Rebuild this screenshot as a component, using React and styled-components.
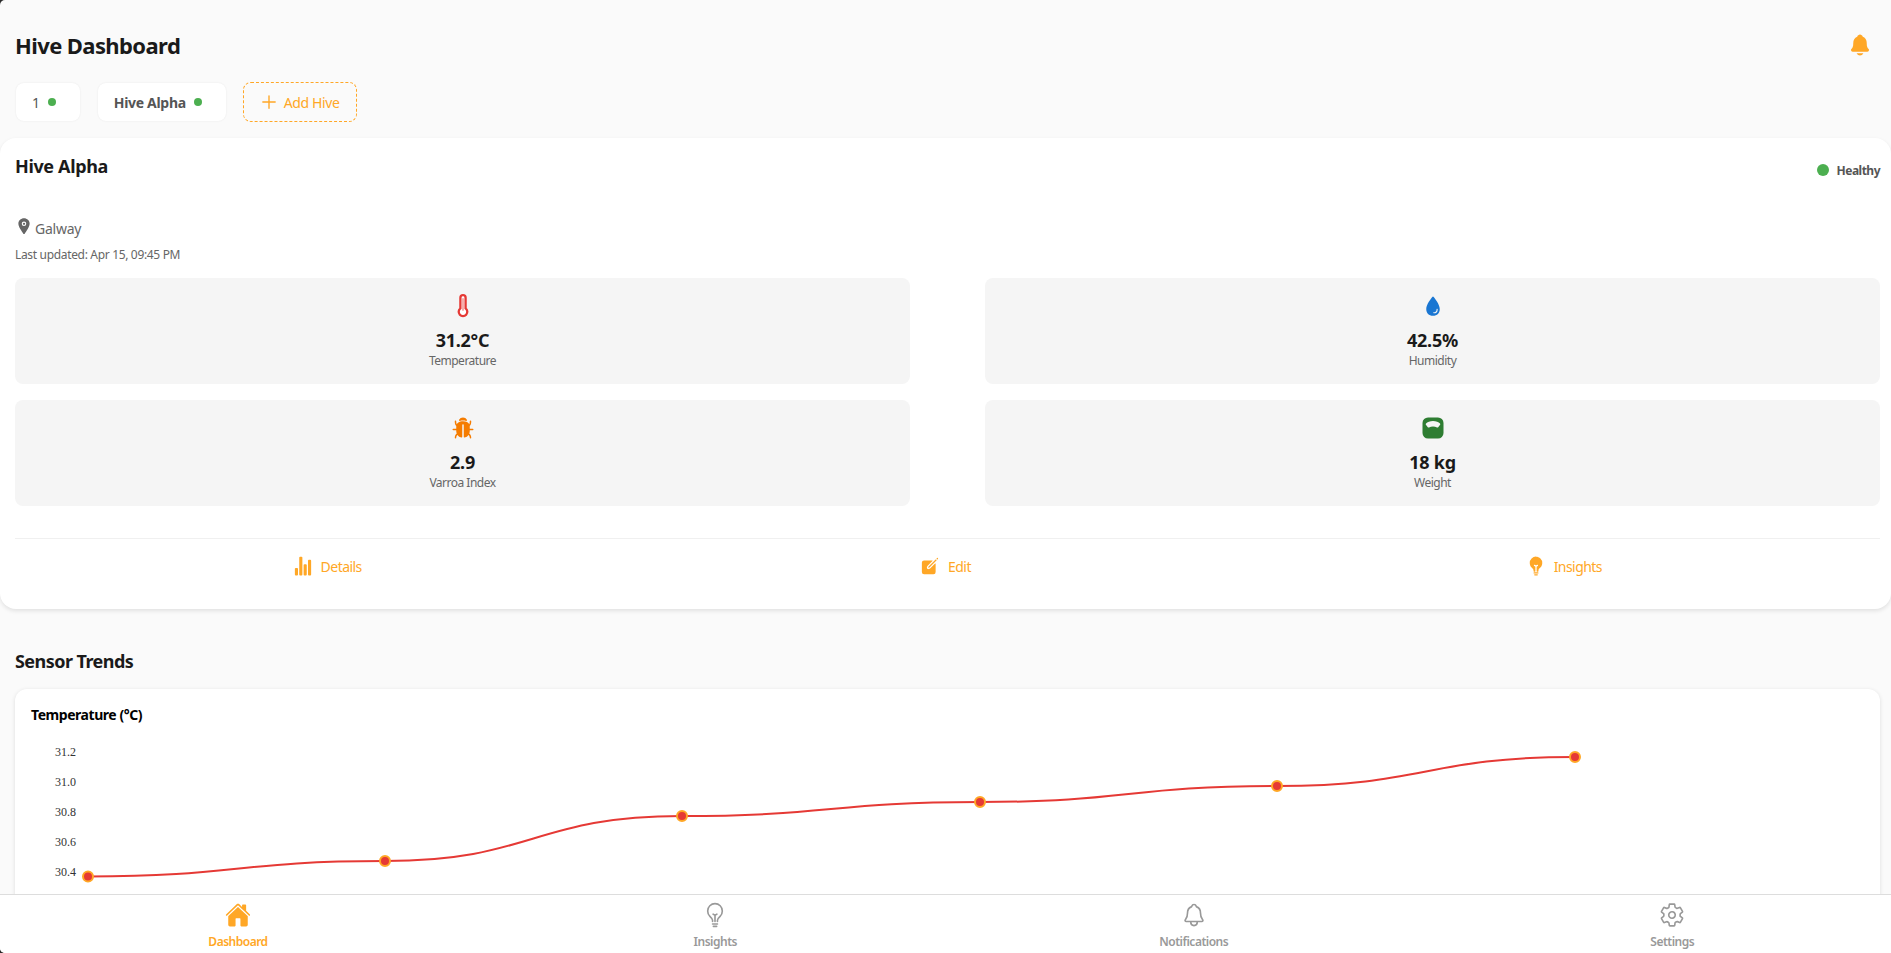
import React from "react";
import styled, { createGlobalStyle } from "styled-components";
import {
  IoNotifications, IoAdd, IoLocation, IoWater, IoBug, IoStatsChart, IoCreate, IoBulb,
  IoHome, IoBulbOutline, IoNotificationsOutline, IoSettingsOutline,
} from "react-icons/io5";

const ORANGE = "#ffa726";

const Global = createGlobalStyle`
  html, body { margin: 0; padding: 0; height: 100%; background: #2a2a2a; }
  * { box-sizing: border-box; }
  body { font-family: "Noto Sans", "Open Sans", sans-serif; color: #1a1a1a; }
`;
const Shell = styled.div`height: 953px; display: flex; flex-direction: column; overflow: hidden; background: #fafafa; border-radius: 5px 0 0 5px;`;
const Main = styled.main`flex: 1; min-height: 0; overflow: hidden;`;
const TopBar = styled.header`display: flex; align-items: center; justify-content: space-between; height: 38px; margin: 26px 16px 0 15px;`;
const Title = styled.h1`margin: 0; font-size: 22px; font-weight: 700; line-height: 38px; letter-spacing: -0.6px;`;
const BellButton = styled.span`display: flex; color: ${ORANGE}; font-size: 24px; margin-right: 3px;`;
const ChipRow = styled.div`display: flex; gap: 18px; margin: 18px 16px 0; align-items: center; height: 40px;`;
const Chip = styled.div`display: flex; align-items: center; gap: 8px; height: 38px; padding: 0 24px 0 16px; background: #fff; border-radius: 8px; box-shadow: 0 0 2px rgba(0,0,0,.08); font-size: 14px; font-weight: ${p => (p.$active ? 700 : 400)}; letter-spacing: -0.3px; color: #555;`;
const Dot = styled.span`width: ${p => p.$size || 8}px; height: ${p => p.$size || 8}px; border-radius: 50%; background: #4caf50; margin-top: -1px;`;
const AddChip = styled.div`display: flex; align-items: center; gap: 4px; height: 40px; width: 114px; margin-left: -1px; padding: 0 14px; border: 1px dashed ${ORANGE}; border-radius: 8px; color: ${ORANGE}; font-size: 14px; letter-spacing: -0.4px; white-space: nowrap; svg { font-size: 22px; flex: none; }`;
const HiveCard = styled.section`margin-top: 16px; height: 471px; background: #fff; border-radius: 16px; box-shadow: 0 2px 4px rgba(0,0,0,.1); padding: 0 11px 0 15px;`;
const HiveHead = styled.div`display: flex; justify-content: space-between; height: 71px;`;
const HiveName = styled.h2`margin: 15px 0 0; font-size: 18px; line-height: 26px; font-weight: 700; letter-spacing: -0.36px;`;
const Status = styled.div`display: flex; align-items: center; gap: 8px; height: 20px; margin-top: 22px; font-size: 12px; font-weight: 700; letter-spacing: -0.5px; color: #555;`;
const Place = styled.div`display: flex; align-items: center; gap: 2px; height: 22px; margin-top: 8px; font-size: 14px; letter-spacing: -0.25px; color: #666; svg { font-size: 18px; margin-top: -4px; }`;
const Updated = styled.div`margin-top: 8px; font-size: 12px; line-height: 16px; letter-spacing: -0.33px; color: #666;`;
const MetricGrid = styled.div`display: grid; grid-template-columns: 895px 895px; justify-content: space-between; row-gap: 16px; margin-top: 15px;`;
const Metric = styled.div`height: 106px; padding-top: 16px; background: #f5f5f5; border-radius: 8px; display: flex; flex-direction: column; align-items: center;`;
const MetricIcon = styled.span`display: flex; height: 24px; font-size: 24px; color: ${p => p.$color};`;
const MetricValue = styled.div`margin-top: 10px; font-size: 18px; line-height: 25px; font-weight: 700; letter-spacing: -0.25px;`;
const MetricLabel = styled.div`font-size: 12px; line-height: 16px; letter-spacing: -0.5px; color: #666;`;
const Actions = styled.div`display: grid; grid-template-columns: repeat(3, 1fr); margin-top: 32px; height: 56px; border-top: 1px solid #f0f0f0; padding: 15px 7px 0 3px;`;
const Action = styled.div`display: flex; align-items: center; justify-content: center; gap: 8px; height: 24px; color: ${ORANGE}; font-size: 14px; letter-spacing: -0.55px; svg { font-size: 20px; }`;
const Trends = styled.section`padding: 0 11px 0 15px;`;
const TrendTitle = styled.h2`margin: 39px 0 0; font-size: 18px; line-height: 26px; font-weight: 700; letter-spacing: -0.55px;`;
const ChartCard = styled.div`margin-top: 15px; background: #fff; border-radius: 12px; box-shadow: 0 1px 4px rgba(0,0,0,.12); padding: 16px; height: 400px;`;
const ChartTitle = styled.h3`margin: 0 0 16px; font-size: 14px; line-height: 20px; font-weight: 700; letter-spacing: -0.45px; color: #000;`;
const Nav = styled.nav`flex: none; height: 59px; display: grid; grid-template-columns: 476px repeat(3, 478.5px); background: #fff; border-top: 1px solid #ddd; overflow: hidden;`;
const NavItem = styled.div`display: flex; flex-direction: column; align-items: center; padding-top: 7px; color: ${p => (p.$active ? ORANGE : "#999")};`;
const NavIcon = styled.span`display: flex; font-size: 26px; height: 26px;`;
const NavLabel = styled.span`margin-top: 6px; font-size: 12px; line-height: 16px; font-weight: 600; letter-spacing: -0.5px;`;

function ThermometerIcon() {
  return (
    <svg width="24" height="24" viewBox="0 0 24 24">
      <path d="M9.400 3.800a2.600 2.600 0 0 1 5.200 0V14.400a4.300 4.300 0 1 1-5.200 0Z" fill="#fff" stroke="#e53935" strokeWidth="2.300" />
      <path d="M12 5v11" stroke="#f4a6a4" strokeWidth="1.800" strokeLinecap="round" />
    </svg>
  );
}

function ScaleIcon() {
  return (
    <svg width="24" height="24" viewBox="0 0 24 24">
      <path fill="#2e7d32" fillRule="evenodd" d="M7 1.500h10a5.500 5.500 0 0 1 5.500 5.500v10a5.500 5.500 0 0 1-5.500 5.500H7A5.500 5.500 0 0 1 1.500 17V7A5.500 5.500 0 0 1 7 1.500zM12 5c-3 0-5.700 1-7 2.400-.4.400-.4.900-.1 1.300l1.900 2.500c.3.400.8.400 1.200.2 1.200-.7 2.600-1 4-1s2.800.3 4 1c.4.200.9.200 1.200-.2l1.900-2.500c.3-.4.3-.9-.1-1.300C17.700 6 15 5 12 5z" />
    </svg>
  );
}

const PTS = [[88, 875.5], [385, 860], [682, 815], [980, 801], [1277, 785], [1575, 756]];
const CHART_TOP = 740;
const pts = PTS.map(([x, y]) => [x - 31, y - CHART_TOP]);
const linePath = pts.reduce((d, [x, y], i) => {
  if (i === 0) return `M${x} ${y}`;
  const [px, py] = pts[i - 1];
  const mx = px + (x - px) / 2;
  return `${d} C${mx} ${py} ${mx} ${y} ${x} ${y}`;
}, "");

function Chart() {
  const labels = ["31.2", "31.0", "30.8", "30.6", "30.4"];
  return (
    <svg width="1800" height="220" viewBox="0 0 1800 220" style={{ display: "block" }}>
      {labels.map((l, i) => (
        <text key={l} x={45} y={15 + i * 30} textAnchor="end" fontFamily="Liberation Serif, serif" fontSize="12" fill="#333">{l}</text>
      ))}
      <path d={linePath} fill="none" stroke="#e53935" strokeWidth="2" />
      {pts.map(([x, y]) => (
        <circle key={x} cx={x} cy={y} r="5" fill="#e53935" stroke={ORANGE} strokeWidth="2" />
      ))}
    </svg>
  );
}

const metrics = [
  { icon: <ThermometerIcon />, color: "#e53935", value: "31.2°C", label: "Temperature" },
  { icon: <IoWater />, color: "#1976d2", value: "42.5%", label: "Humidity" },
  { icon: <IoBug />, color: "#f57c00", value: "2.9", label: "Varroa Index" },
  { icon: <ScaleIcon />, color: "#2e7d32", value: "18 kg", label: "Weight" },
];
const navItems = [
  { icon: <IoHome />, label: "Dashboard", active: true },
  { icon: <IoBulbOutline />, label: "Insights" },
  { icon: <IoNotificationsOutline />, label: "Notifications" },
  { icon: <IoSettingsOutline />, label: "Settings" },
];

export default function App() {
  return (
    <>
      <Global />
      <Shell>
        <Main>
          <TopBar>
            <Title>Hive Dashboard</Title>
            <BellButton><IoNotifications /></BellButton>
          </TopBar>
          <ChipRow>
            <Chip>1 <Dot /></Chip>
            <Chip $active>Hive Alpha <Dot /></Chip>
            <AddChip><IoAdd />Add Hive</AddChip>
          </ChipRow>
          <HiveCard>
            <HiveHead>
              <HiveName>Hive Alpha</HiveName>
              <Status><Dot $size={12} />Healthy</Status>
            </HiveHead>
            <Place><IoLocation />Galway</Place>
            <Updated>Last updated: Apr 15, 09:45 PM</Updated>
            <MetricGrid>
              {metrics.map(m => (
                <Metric key={m.label}>
                  <MetricIcon $color={m.color}>{m.icon}</MetricIcon>
                  <MetricValue>{m.value}</MetricValue>
                  <MetricLabel>{m.label}</MetricLabel>
                </Metric>
              ))}
            </MetricGrid>
            <Actions>
              <Action><IoStatsChart />Details</Action>
              <Action><IoCreate />Edit</Action>
              <Action><IoBulb />Insights</Action>
            </Actions>
          </HiveCard>
          <Trends>
            <TrendTitle>Sensor Trends</TrendTitle>
            <ChartCard>
              <ChartTitle>Temperature (°C)</ChartTitle>
              <Chart />
            </ChartCard>
          </Trends>
        </Main>
        <Nav>
          {navItems.map(n => (
            <NavItem key={n.label} $active={n.active}>
              <NavIcon>{n.icon}</NavIcon>
              <NavLabel>{n.label}</NavLabel>
            </NavItem>
          ))}
        </Nav>
      </Shell>
    </>
  );
}
